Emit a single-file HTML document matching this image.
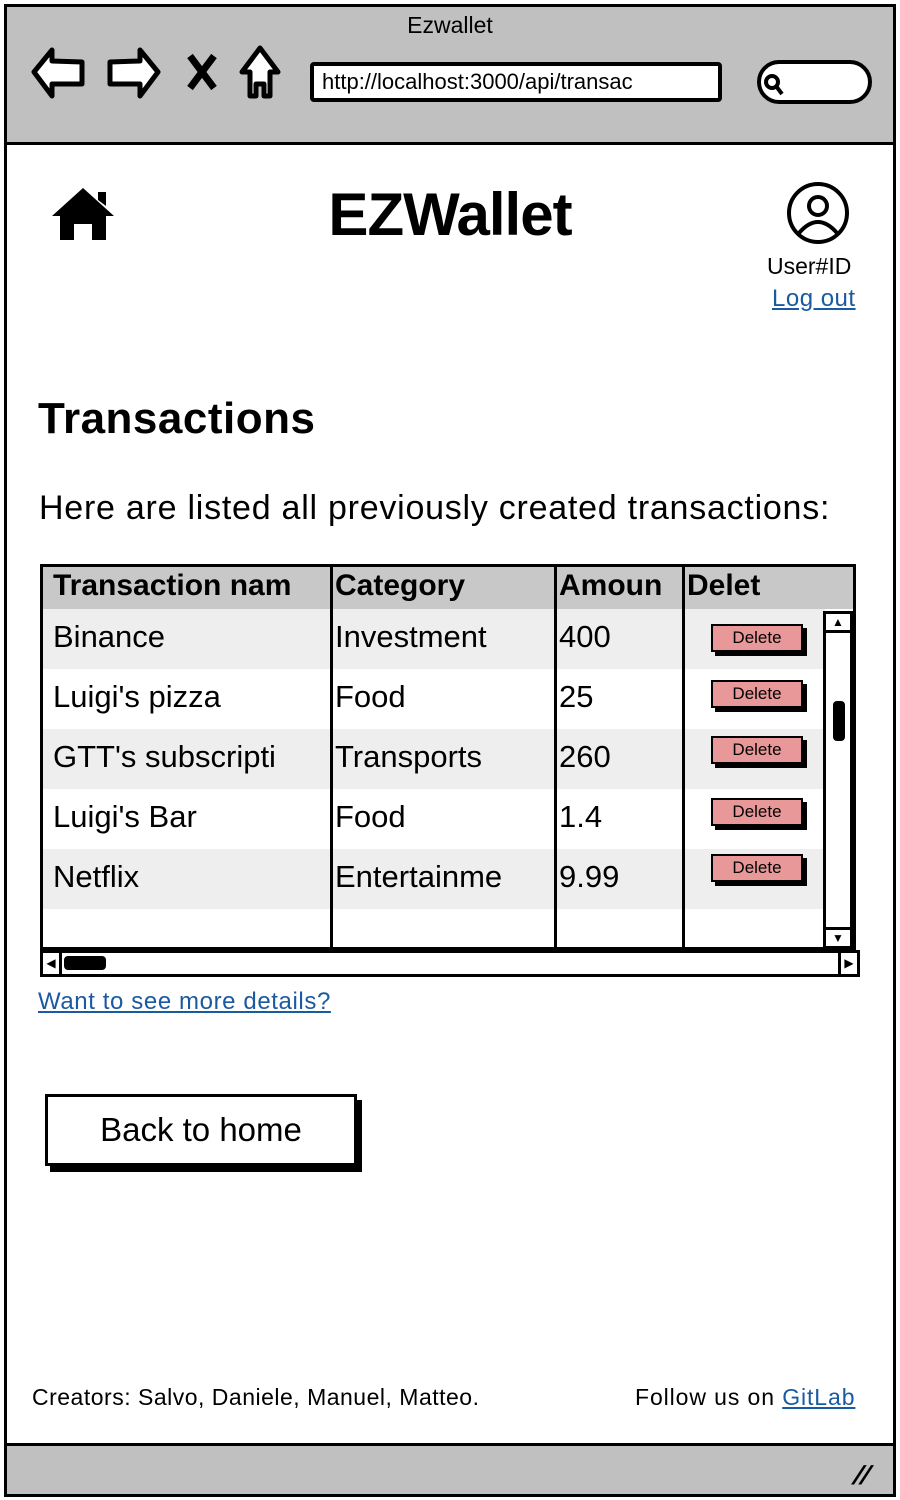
<!DOCTYPE html>
<html><head><meta charset="utf-8"><style>
*{margin:0;padding:0;box-sizing:border-box}
body{width:900px;height:1500px;background:#fff;position:relative;overflow:hidden;font-family:"Liberation Sans",sans-serif;color:#000}
.a{position:absolute;white-space:nowrap}
.cell{position:absolute;white-space:nowrap;overflow:hidden;font-size:31px;line-height:60px}
.del{position:absolute;width:92px;height:28px;background:#e89898;border:2px solid #000;box-shadow:4px 4px 0 #000;font-size:17px;text-align:center;line-height:24px}
a{color:#1a5aa0;text-decoration:underline}
</style></head><body>
<div class="a" style="left:4px;top:4px;width:892px;height:1493px;border:3px solid #000"></div>
<div class="a" style="left:7px;top:7px;width:886px;height:138px;background:#c0c0c0;border-bottom:3px solid #000"></div>
<div class="a" style="left:0;width:900px;top:12px;text-align:center;font-size:23px">Ezwallet</div>
<svg class="a" style="left:30px;top:44px" width="260" height="60" viewBox="0 0 260 60" fill="#fff" stroke="#000" stroke-width="5" stroke-linejoin="round">
<path d="M4 28 L22 6 L22 17 L52 18 L52 40 L22 40 L22 52 Z"/>
<path d="M128 28 L110 6 L110 17 L80 18 L80 40 L110 40 L110 52 Z"/>
<path d="M160 12 L184 44 M184 12 L160 44" stroke-width="7"/>
<path d="M230 4 L248 28 L240 28 L240 52 L234 52 L234 40 L226 40 L226 52 L220 52 L220 28 L212 28 Z"/>
</svg>
<div class="a" style="left:310px;top:62px;width:412px;height:40px;background:#fff;border:4px solid #000;border-radius:4px;font-size:22px;line-height:32px;padding-left:8px">http://localhost:3000/api/transac</div>
<div class="a" style="left:757px;top:60px;width:115px;height:44px;background:#fff;border:4px solid #000;border-radius:22px"></div>
<svg class="a" style="left:762px;top:72px" width="24" height="24"><circle cx="10" cy="10" r="6" fill="none" stroke="#000" stroke-width="4"/><path d="M14 14 L20 22" stroke="#000" stroke-width="4"/></svg>

<svg class="a" style="left:50px;top:186px" width="66" height="56" viewBox="0 0 66 56"><path d="M33 2 L64 30 L56 30 L56 54 L42 54 L42 38 L24 38 L24 54 L10 54 L10 30 L2 30 Z M48 6 L56 6 L56 20 L48 14 Z" fill="#000"/></svg>
<div class="a" style="left:0;width:900px;top:180px;text-align:center;font-size:60px;font-weight:bold;letter-spacing:-1px">EZWallet</div>
<svg class="a" style="left:786px;top:181px" width="64" height="64"><circle cx="32" cy="32" r="29" fill="none" stroke="#000" stroke-width="4"/><circle cx="32" cy="25" r="9" fill="none" stroke="#000" stroke-width="4"/><path d="M13 52 Q32 30 51 52" fill="none" stroke="#000" stroke-width="4"/></svg>
<div class="a" style="left:767px;top:253px;font-size:23px">User#ID</div>
<div class="a" style="left:772px;top:285px;font-size:24px;letter-spacing:0.5px"><a>Log out</a></div>

<div class="a" style="left:38px;top:394px;font-size:44px;font-weight:bold;letter-spacing:0.5px">Transactions</div>
<div class="a" style="left:39px;top:489px;font-size:34px;letter-spacing:0.75px">Here are listed all previously created transactions:</div>

<div class="a" style="left:40px;top:564px;width:816px;height:386px;border:3px solid #000;background:#fff;overflow:hidden">
 <div class="a" style="left:0;top:0;width:816px;height:42px;background:#c8c8c8"></div>
 <div class="a" style="left:0;top:42px;width:782px;height:60px;background:#eee"></div>
 <div class="a" style="left:0;top:162px;width:782px;height:60px;background:#eee"></div>
 <div class="a" style="left:0;top:282px;width:782px;height:60px;background:#eee"></div>
 <div class="a" style="left:287px;top:0;width:3px;height:386px;background:#000"></div>
 <div class="a" style="left:511px;top:0;width:3px;height:386px;background:#000"></div>
 <div class="a" style="left:639px;top:0;width:3px;height:386px;background:#000"></div>
 <div class="cell" style="left:10px;top:-11px;width:275px;font-weight:bold;font-size:30px">Transaction nam</div>
 <div class="cell" style="left:292px;top:-11px;width:218px;font-weight:bold;font-size:30px">Category</div>
 <div class="cell" style="left:516px;top:-11px;width:122px;font-weight:bold;font-size:30px">Amoun</div>
 <div class="cell" style="left:644px;top:-11px;width:90px;font-weight:bold;font-size:30px">Delet</div>
 <div class="cell" style="left:10px;top:40px;width:275px">Binance</div>
 <div class="cell" style="left:292px;top:40px;width:218px">Investment</div>
 <div class="cell" style="left:516px;top:40px">400</div>
 <div class="cell" style="left:10px;top:100px;width:275px">Luigi's pizza</div>
 <div class="cell" style="left:292px;top:100px;width:218px">Food</div>
 <div class="cell" style="left:516px;top:100px">25</div>
 <div class="cell" style="left:10px;top:160px;width:275px">GTT's subscripti</div>
 <div class="cell" style="left:292px;top:160px;width:218px">Transports</div>
 <div class="cell" style="left:516px;top:160px">260</div>
 <div class="cell" style="left:10px;top:220px;width:275px">Luigi's Bar</div>
 <div class="cell" style="left:292px;top:220px;width:218px">Food</div>
 <div class="cell" style="left:516px;top:220px">1.4</div>
 <div class="cell" style="left:10px;top:280px;width:275px">Netflix</div>
 <div class="cell" style="left:292px;top:280px;width:218px">Entertainme</div>
 <div class="cell" style="left:516px;top:280px">9.99</div>
 <div class="del" style="left:668px;top:57px">Delete</div>
 <div class="del" style="left:668px;top:113px">Delete</div>
 <div class="del" style="left:668px;top:169px">Delete</div>
 <div class="del" style="left:668px;top:231px">Delete</div>
 <div class="del" style="left:668px;top:287px">Delete</div>
 <div class="a" style="left:780px;top:44px;width:30px;height:338px;border:3px solid #000;background:#fff"></div>
 <div class="a" style="left:780px;top:44px;width:30px;height:22px;border:3px solid #000;background:#fff;font-size:12px;text-align:center;line-height:16px">▲</div>
 <div class="a" style="left:780px;top:360px;width:30px;height:22px;border:3px solid #000;background:#fff;font-size:12px;text-align:center;line-height:16px">▼</div>
 <div class="a" style="left:790px;top:134px;width:12px;height:40px;background:#000;border-radius:4px"></div>
</div>
<div class="a" style="left:40px;top:950px;width:820px;height:27px;border:3px solid #000;background:#fff"></div>
<div class="a" style="left:40px;top:950px;width:22px;height:27px;border:3px solid #000;font-size:12px;line-height:21px;text-align:center">◀</div>
<div class="a" style="left:838px;top:950px;width:22px;height:27px;border:3px solid #000;font-size:12px;line-height:21px;text-align:center">▶</div>
<div class="a" style="left:64px;top:956px;width:42px;height:14px;background:#000;border-radius:4px"></div>

<div class="a" style="left:38px;top:988px;font-size:24px;letter-spacing:0.6px"><a>Want to see more details?</a></div>

<div class="a" style="left:45px;top:1094px;width:312px;height:72px;border:3px solid #000;background:#fff;box-shadow:5px 6px 0 #000;font-size:33px;text-align:center;line-height:66px">Back to home</div>

<div class="a" style="left:32px;top:1384px;font-size:23px;letter-spacing:0.5px">Creators: Salvo, Daniele, Manuel, Matteo.</div>
<div class="a" style="left:635px;top:1384px;font-size:23px;letter-spacing:0.9px">Follow us on <a>GitLab</a></div>

<div class="a" style="left:7px;top:1443px;width:886px;height:51px;background:#c0c0c0;border-top:3px solid #000"></div>
<div class="a" style="left:855px;top:1460px;font-size:26px;font-weight:bold;transform:skewX(-25deg)">//</div>
</body></html>
